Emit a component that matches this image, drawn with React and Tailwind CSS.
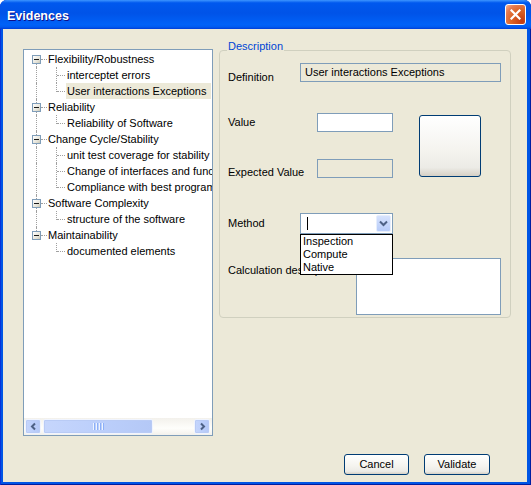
import React from "react";

const tree = [
  { label: "Flexibility/Robustness", children: ["interceptet errors", "User interactions Exceptions"] },
  { label: "Reliability", children: ["Reliability of Software"] },
  {
    label: "Change Cycle/Stability",
    children: [
      "unit test coverage for stability",
      "Change of interfaces and functions",
      "Compliance with best programming practices",
    ],
  },
  { label: "Software Complexity", children: ["structure of the software"] },
  { label: "Maintainability", children: ["documented elements"] },
];

const selected = "User interactions Exceptions";
const dot = "border-dotted border-[#a0a0a0]";
const xpButton =
  "rounded-[3px] border border-[#003c74] bg-[linear-gradient(180deg,#ffffff,#f4f3ee_60%,#ecebe6_86%,#d6d0c5)] text-black";
const sbBlue =
  "rounded-[2px] border border-[#f0f4fe] bg-[linear-gradient(90deg,#c6d6fc,#bccffb_50%,#b4c8f6)] shadow-[inset_0_0_0_1px_#b9cbf5]";

const ParentRow = ({ label, first, last }) => (
  <div className="flex h-4 items-center whitespace-nowrap">
    <span className="relative h-4 w-[24px] shrink-0">
      {!first && <span className={`absolute left-[12px] top-0 h-[4px] border-l ${dot}`} />}
      {!last && <span className={`absolute bottom-0 left-[12px] top-[13px] border-l ${dot}`} />}
      <span className={`absolute left-[17px] top-[8px] w-[6px] border-t ${dot}`} />
      <span className="absolute left-[8px] top-[4px] flex h-[9px] w-[9px] items-center justify-center border border-[#7f9db9] bg-[linear-gradient(135deg,#ffffff,#e4e2d6_70%,#c9c6b4)]">
        <span className="h-px w-[5px] bg-[#1a1a1a]" />
      </span>
    </span>
    <span>{label}</span>
  </div>
);

const ChildRow = ({ label, parentLast, last }) => (
  <div className="flex h-4 items-center whitespace-nowrap">
    <span className="relative h-4 w-[24px] shrink-0">
      {!parentLast && <span className={`absolute bottom-0 left-[12px] top-0 border-l ${dot}`} />}
    </span>
    <span className="relative h-4 w-[18px] shrink-0">
      <span className={`absolute left-[8px] top-0 border-l ${dot} ${last ? "h-[9px]" : "h-4"}`} />
      <span className={`absolute left-[9px] top-[8px] w-[8px] border-t ${dot}`} />
    </span>
    <span className={`h-4 pl-[1px] pr-[5px] leading-4 ${label === selected ? "bg-[#ece9d8]" : ""}`}>{label}</span>
  </div>
);

const Chevron = ({ dir }) => (
  <svg width="9" height="9" viewBox="0 0 9 9">
    <path
      d={dir === "left" ? "M6 1.5 L3 4.5 L6 7.5" : "M3 1.5 L6 4.5 L3 7.5"}
      fill="none"
      stroke="#4d6185"
      strokeWidth="2"
    />
  </svg>
);

export default function App() {
  return (
    <div className="h-[485px] w-[531px] bg-white font-['Liberation_Sans',Arial,sans-serif] text-[11px] text-black">
      <div className="flex h-full w-full flex-col overflow-hidden rounded-t-[7px] bg-[#0055e5] shadow-[inset_1px_0_0_#0831d9,inset_-1px_0_0_#001ea0,inset_0_-1px_0_#001ea0]">
        {/* title bar */}
        <div className="flex h-[29px] shrink-0 items-center justify-between bg-[linear-gradient(180deg,#3d95ff,#0058ee_10%,#0053e8_45%,#0062f8_85%,#005bf0_93%,#003dd7)] pl-[7px] pr-[5px]">
          <span className="pt-[4px] text-[12.5px] font-bold text-white [text-shadow:1px_1px_#0f1089]">Evidences</span>
          <button className="flex h-[21px] w-[21px] items-center justify-center rounded-[3px] border border-white bg-[radial-gradient(circle_at_85%_85%,#c23a10,#dc6527_50%,#e57a50_75%,#f5b496)]">
            <svg width="11" height="11" viewBox="0 0 11 11">
              <path d="M1.5 1.5 L9.5 9.5 M9.5 1.5 L1.5 9.5" stroke="#fff" strokeWidth="2.2" strokeLinecap="square" />
            </svg>
          </button>
        </div>

        {/* body */}
        <div className="ml-[3px] mr-[4px] mb-[3px] flex flex-1 flex-col bg-[#ece9d8]">
          <div className="flex pl-[20px] pt-[20px]">
            {/* tree */}
            <div className="flex h-[387px] w-[190px] shrink-0 flex-col border border-[#7f9db9] bg-white">
              <div className="min-h-0 flex-1 overflow-hidden pt-px">
                {tree.map((g, gi) => {
                  const parentLast = gi === tree.length - 1;
                  return (
                    <div key={g.label}>
                      <ParentRow label={g.label} first={gi === 0} last={parentLast} />
                      {g.children.map((c, ci) => (
                        <ChildRow key={c} label={c} parentLast={parentLast} last={ci === g.children.length - 1} />
                      ))}
                    </div>
                  );
                })}
              </div>
              <div className="flex h-[17px] shrink-0 items-stretch bg-[linear-gradient(180deg,#f3f1ec,#fefefb_60%,#f3f1ec)] p-px">
                <div className={`flex w-[16px] items-center justify-center ${sbBlue}`}>
                  <Chevron dir="left" />
                </div>
                <div className={`ml-[2px] flex w-[110px] items-center justify-center ${sbBlue}`}>
                  <div className="flex gap-px">
                    <span className="h-[7px] w-px bg-[#eef4fe] shadow-[1px_0_0_#8cb0f8]" />
                    <span className="ml-px h-[7px] w-px bg-[#eef4fe] shadow-[1px_0_0_#8cb0f8]" />
                    <span className="ml-px h-[7px] w-px bg-[#eef4fe] shadow-[1px_0_0_#8cb0f8]" />
                    <span className="ml-px h-[7px] w-px bg-[#eef4fe] shadow-[1px_0_0_#8cb0f8]" />
                  </div>
                </div>
                <div className="flex-1" />
                <div className={`mr-px flex w-[16px] items-center justify-center ${sbBlue}`}>
                  <Chevron dir="right" />
                </div>
              </div>
            </div>

            {/* description group */}
            <div className="relative ml-[6px] mt-px h-[268px] w-[292px] rounded-[4px] border border-[#d0d0bf] pl-[8px] pt-[12px]">
              <span className="absolute left-[7px] top-[-11px] bg-[#ece9d8] px-px leading-[13px] text-[#0046d5]">
                Description
              </span>

              <div className="flex items-start">
                <span className="mt-[8px] w-[72px] leading-[13px]">Definition</span>
                <div className="flex h-[19px] w-[201px] items-center border border-[#7f9db9] bg-[#ece9d8] pl-[4px]">
                  User interactions Exceptions
                </div>
              </div>

              <div className="mt-[29px] flex items-start">
                <div className="flex w-[165px] flex-col">
                  <div className="flex h-[19px] items-center">
                    <span className="w-[89px]">Value</span>
                    <div className="h-[19px] w-[76px] border border-[#7f9db9] bg-white" />
                  </div>
                  <div className="mt-[27px] flex items-start">
                    <span className="mt-[7px] w-[89px] leading-[13px]">Expected Value</span>
                    <div className="h-[19px] w-[76px] border border-[#7f9db9] bg-[#ece9d8]" />
                  </div>
                </div>
                <button className={`ml-[26px] mt-[2px] h-[62px] w-[62px] ${xpButton}`} />
              </div>

              <div className="mt-[34px] flex h-[21px] items-center">
                <span className="w-[72px]">Method</span>
                <div className="relative z-10 flex h-[21px] w-[93px] items-center border border-[#7f9db9] bg-white">
                  <span className="ml-[6px] h-[13px] w-px bg-black" />
                  <div className="ml-auto mr-px flex h-[17px] w-[15px] items-center justify-center rounded-[2px] border border-[#e6eefc] bg-[linear-gradient(180deg,#d6e2fd,#b7ccf9)]">
                    <svg width="9" height="7" viewBox="0 0 9 7">
                      <path d="M1 1.5 L4.5 5 L8 1.5" fill="none" stroke="#4d6185" strokeWidth="2" />
                    </svg>
                  </div>
                  <div className="absolute left-[-1px] top-[20px] flex w-[93px] flex-col border border-black bg-white">
                    <span className="h-[13px] pl-[2px] leading-[13px]">Inspection</span>
                    <span className="h-[13px] pl-[2px] leading-[13px]">Compute</span>
                    <span className="h-[13px] pl-[2px] leading-[13px]">Native</span>
                  </div>
                </div>
              </div>

              <div className="mt-[24px] flex items-start">
                <span className="mt-[6px] w-[128px] overflow-hidden whitespace-nowrap leading-[13px]">
                  Calculation description
                </span>
                <div className="h-[57px] w-[145px] border border-[#7f9db9] bg-white" />
              </div>
            </div>
          </div>

          <div className="mt-[18px] flex justify-end gap-[15px] pr-[37px]">
            <button className={`h-[21px] w-[65px] ${xpButton}`}>Cancel</button>
            <button className={`h-[21px] w-[66px] ${xpButton}`}>Validate</button>
          </div>
        </div>
      </div>
    </div>
  );
}
